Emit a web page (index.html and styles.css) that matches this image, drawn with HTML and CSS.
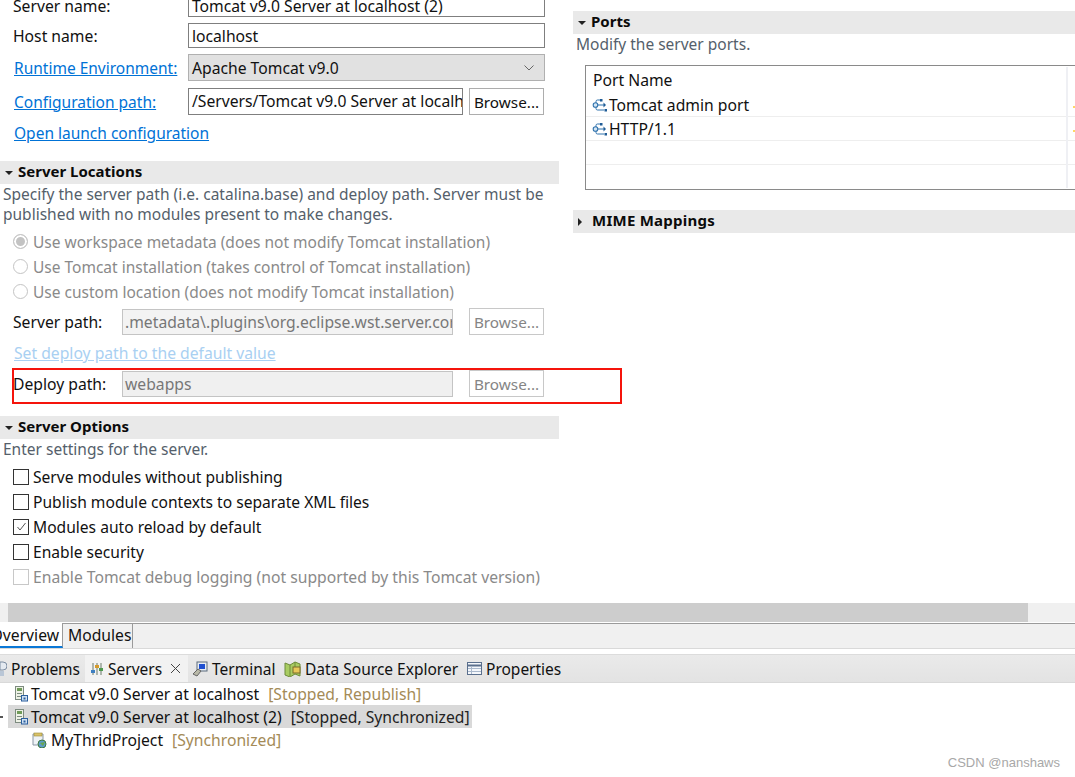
FILE: index.html
```html
<!DOCTYPE html>
<html lang="en">
<head>
<meta charset="utf-8">
<title>Tomcat Server Overview</title>
<link rel="stylesheet" href="styles.css">
</head>
<body>
<svg class="defs" width="0" height="0" aria-hidden="true">
  <symbol id="i-port" viewBox="0 0 16 14">
    <path d="M4 5V3.500Q4 2 5.500 2H8M6 7h6M4 9v1.500Q4 12 5.500 12H12" fill="none" stroke="#2f72ad" stroke-width="1"/>
    <circle cx="3.500" cy="7" r="2.300" fill="#d5e6f4" stroke="#2f72ad" stroke-width="1.100"/>
    <rect x="8" y="1" width="2.500" height="2.500" fill="#1f5c96"/>
    <path d="M11.500 4.500 14 7l-2.500 2.500z" fill="#1f5c96"/>
    <rect x="12.500" y="11" width="2.500" height="2.500" fill="#1f5c96"/>
  </symbol>
  <symbol id="i-server" viewBox="0 0 14 16">
    <rect x="1.500" y=".5" width="8" height="13" fill="#eef2e6" stroke="#7d8b80"/>
    <rect x="3" y="2" width="5" height="3" fill="#6f9a58"/>
    <rect x="3" y="7" width="5" height="1" fill="#7d8b80"/>
    <rect x="3" y="10" width="5" height="1" fill="#7d8b80"/>
    <rect x="7.500" y="9.500" width="6" height="5.500" fill="#cfe0f2" stroke="#2b5f9e"/>
    <rect x="9.500" y="11.500" width="2" height="2" fill="#2b5f9e"/>
  </symbol>
</svg>

<main class="editor">
  <section class="col-left">
    <div class="form-row row-name">
      <span class="label">Server name:</span>
      <span class="field wide">Tomcat v9.0 Server at localhost (2)</span>
    </div>
    <div class="form-row row-host">
      <span class="label">Host name:</span>
      <span class="field wide">localhost</span>
    </div>
    <div class="form-row row-runtime">
      <a class="label link">Runtime Environment:</a>
      <span class="field wide combo">Apache Tomcat v9.0
        <svg class="chevron" width="12" height="8" viewBox="0 0 12 8"><path d="M1.500 1.500 6 6l4.500-4.500" fill="none" stroke="#666" stroke-width="1"/></svg>
      </span>
    </div>
    <div class="form-row row-config">
      <a class="label link">Configuration path:</a>
      <span class="field short clip">/Servers/Tomcat v9.0 Server at localh</span>
      <span class="btn">Browse...</span>
    </div>
    <div class="form-row row-launch"><a class="link launch">Open launch configuration</a></div>

    <h2 class="section-head head-loc"><i class="tri down"></i>Server Locations</h2>
    <p class="desc two-line">Specify the server path (i.e. catalina.base) and deploy path. Server must be<br>published with no modules present to make changes.</p>

    <div class="radios">
      <div class="opt off"><i class="radio on"></i>Use workspace metadata (does not modify Tomcat installation)</div>
      <div class="opt off"><i class="radio"></i>Use Tomcat installation (takes control of Tomcat installation)</div>
      <div class="opt off"><i class="radio"></i>Use custom location (does not modify Tomcat installation)</div>
    </div>

    <div class="form-row row-path">
      <span class="label small">Server path:</span>
      <span class="field disabled clip">.metadata\.plugins\org.eclipse.wst.server.cor</span>
      <span class="btn off-btn">Browse...</span>
    </div>
    <div class="form-row row-setdeploy"><a class="link faded">Set deploy path to the default value</a></div>
    <div class="form-row row-deploy">
      <span class="label small">Deploy path:</span>
      <span class="field disabled filled">webapps</span>
      <span class="btn off-btn">Browse...</span>
      <span class="annotation"></span>
    </div>

    <h2 class="section-head head-opt"><i class="tri down"></i>Server Options</h2>
    <p class="desc">Enter settings for the server.</p>
    <div class="checks">
      <div class="opt"><i class="check"></i>Serve modules without publishing</div>
      <div class="opt"><i class="check"></i>Publish module contexts to separate XML files</div>
      <div class="opt"><i class="check"><svg width="13" height="13" viewBox="0 0 13 13"><path d="M2.500 7 5 10l5.500-7" fill="none" stroke="#555" stroke-width="1"/></svg></i>Modules auto reload by default</div>
      <div class="opt"><i class="check"></i>Enable security</div>
      <div class="opt off debug"><i class="check dim"></i>Enable Tomcat debug logging (not supported by this Tomcat version)</div>
    </div>
  </section>

  <section class="col-right">
    <h2 class="section-head"><i class="tri down"></i>Ports</h2>
    <p class="desc">Modify the server ports.</p>
    <div class="ports">
      <div class="port-head">Port Name</div>
      <div class="port-row"><svg class="p-icon"><use href="#i-port"/></svg>Tomcat admin port<i class="mark"></i></div>
      <div class="port-row"><svg class="p-icon"><use href="#i-port"/></svg>HTTP/1.1<i class="mark"></i></div>
      <div class="port-row"></div>
      <div class="port-row last"></div>
    </div>
    <h2 class="section-head head-mime"><i class="tri right"></i>MIME Mappings</h2>
  </section>
</main>

<div class="hscroll"><div class="thumb"></div></div>

<nav class="page-tabs">
  <span class="ptab active"><span class="ov">Overview</span></span>
  <span class="ptab">Modules</span>
</nav>

<nav class="view-tabs">
  <span class="vtab first">
    <svg width="7" height="16" viewBox="0 0 7 16"><path d="M0 1h3a3 3 0 0 1 0 8H0z" fill="#e4eaf1" stroke="#7d8ea3"/><path d="M0 10h4v5H0z" fill="#b9c6d6"/></svg>
    Problems</span>
  <span class="vtab current">
    <svg width="14" height="14" viewBox="0 0 14 14"><path d="M3 1v12M7 1v12M11 1v12" stroke="#6b7a6b"/><rect x="1" y="8" width="4" height="3" fill="#3e7fc1"/><rect x="5" y="3" width="4" height="3" fill="#d69a2a"/><rect x="9" y="6" width="4" height="3" fill="#4e9a4e"/></svg>
    Servers
    <svg class="close" width="11" height="11" viewBox="0 0 11 11"><path d="m1 1 9 9M10 1l-9 9" stroke="#444" stroke-width="1"/></svg>
  </span>
  <span class="vtab term">
    <svg width="16" height="16" viewBox="0 0 16 16"><rect x="5" y="1" width="10" height="9" fill="#e8edf3" stroke="#5b6b7d"/><rect x="7" y="3" width="6" height="5" fill="#1f4fd0"/><path d="m1 13 5-5 3 2-4 5z" fill="#b9b9a8" stroke="#666"/></svg>
    Terminal</span>
  <span class="vtab dse">
    <svg width="17" height="16" viewBox="0 0 17 16"><path d="M1 2l5 2 5-3 5 2v12l-5-2-5 3-5-2z" fill="#a9cc62" stroke="#6d8b3a"/><path d="M6 4v11M11 1v11" stroke="#6d8b3a"/><rect x="9" y="6" width="7" height="6" fill="#e8c85a" stroke="#7a6a2a"/></svg>
    Data Source Explorer</span>
  <span class="vtab props">
    <svg width="15" height="14" viewBox="0 0 15 14"><rect x=".5" y=".5" width="14" height="12" fill="#f4f7fb" stroke="#5a6f8d"/><path d="M1 3.500h13" stroke="#5a6f8d" stroke-width="2"/><path d="M4.500 4v8M1 6.500h13M1 9.500h13" stroke="#a9b8cc"/></svg>
    Properties</span>
</nav>

<section class="tree">
  <div class="node"><svg class="n-icon"><use href="#i-server"/></svg>Tomcat v9.0 Server at localhost<span class="state">[Stopped, Republish]</span></div>
  <div class="node selected"><i class="twisty"></i><svg class="n-icon"><use href="#i-server"/></svg>Tomcat v9.0 Server at localhost (2)<span class="state dark">[Stopped, Synchronized]</span></div>
  <div class="node child">
    <svg class="n-icon" viewBox="0 0 16 16"><path d="M2 2h10v11H2z" fill="#eef2f6" stroke="#8a97a5"/><rect x="3" y="1" width="8" height="3" fill="#d9c26a" stroke="#9a8a3a" stroke-width=".6"/><circle cx="11" cy="12" r="4" fill="#5d9bc9" stroke="#3f7a3f"/><path d="M9 11l3 3 2-4" fill="#6aa84f"/></svg>
    MyThridProject<span class="state">[Synchronized]</span></div>
</section>

<footer class="watermark">CSDN @nanshaws</footer>
</body>
</html>
```

FILE: styles.css
```css
* { box-sizing: border-box; }
html, body { margin: 0; padding: 0; }
body {
  width: 1075px;
  height: 777px;
  overflow: hidden;
  background: #fff;
  color: #111;
  font: 15.7px/20px "Noto Sans", "Open Sans", sans-serif;
  position: relative;
}
.defs { position: absolute; }
p, h2 { margin: 0; }
i { display: block; font-style: normal; }

.editor {
  display: grid;
  grid-template-columns: 559px 502px;
  column-gap: 14px;
  height: 603px;
}
.col-left { margin-top: -6px; }
.col-right { padding-top: 11px; width: 502px; }

.form-row { display: flex; align-items: center; padding-left: 13px; }
.label { width: 175px; flex: none; white-space: nowrap; }
.label.small { width: 109px; }
.link.label, .link.launch { padding-left: 1px; font-size: 15.5px; }
.row-name { height: 23px; }
.row-host { height: 25px; margin-top: 6px; }
.row-runtime { height: 27px; margin-top: 6px; }
.row-config { height: 27px; margin-top: 7px; }
.row-launch { height: 20px; margin-top: 8px; }
.row-path { height: 27px; margin-top: 4px; }
.row-setdeploy { height: 20px; margin-top: 8px; }
.row-deploy { height: 27px; margin-top: 7px; position: relative; }

.link { color: #0072d6; text-decoration: underline; }
.link.faded { color: #a9d0f2; padding-left: 1px; }

.field {
  display: flex;
  align-items: center;
  height: 100%;
  border: 1px solid #7f7f7f;
  padding: 0 3px;
  background: #fff;
  white-space: nowrap;
  overflow: hidden;
}
.field.wide { width: 357px; }
.field.short { width: 275px; }
.field.clip { display: block; line-height: 24px; }
.field.combo {
  background: #e1e1e1;
  border-color: #b0b0b0;
  justify-content: space-between;
  padding-right: 9px;
}
.field.disabled {
  width: 331px;
  height: 26px;
  border-color: #c4c4c4;
  background: #f0f0f0;
  color: #777;
  padding: 0 2px;
}
.row-path .field.disabled { background: #f3f3f3; }

.btn {
  display: flex;
  align-items: center;
  justify-content: center;
  width: 75px;
  height: 100%;
  margin-left: 6px;
  border: 1px solid #adadad;
  background: #fff;
  flex: none;
  font-size: 15.3px;
  white-space: nowrap;
}
.btn.off-btn { margin-left: 16px; color: #858585; border-color: #c8c8c8; }

.annotation {
  position: absolute;
  left: 12px;
  top: -2px;
  width: 610px;
  height: 36px;
  border: 2px solid #f5140c;
}

.section-head {
  display: flex;
  align-items: center;
  height: 23px;
  padding-bottom: 4px;
  background: #e9e9e9;
  font-size: 15px;
  font-weight: 700;
  color: #0b0b0b;
}
.head-loc { margin-top: 18px; }
.head-opt { margin-top: 19px; }
.head-mime { margin-top: 20px; letter-spacing: .25px; }
.tri { width: 0; height: 0; margin: 4px 5px 0 5px; }
.tri.down { border: 4px solid transparent; border-top: 4px solid #222; border-bottom: 0; }
.tri.right { border: 4px solid transparent; border-left: 4px solid #222; border-right: 0; margin: 4px 10px 0 5px; }

.desc { padding-left: 3px; color: #555f6b; font-size: 15.5px; }

.radios { margin-top: 5px; font-size: 15.5px; }
.checks { margin-top: 5px; font-size: 15.6px; }
.opt { display: flex; align-items: center; height: 25px; padding-left: 13px; white-space: nowrap; }
.opt.off { color: #8a8a8a; }
.opt.debug { font-size: 15.7px; }
.radio {
  width: 15px; height: 15px; margin-right: 5px;
  border: 1px solid #c4c4c4; border-radius: 50%;
  background: #fff; display: flex;
}
.radio.on { box-shadow: inset 0 0 0 2px #fff; background: #c3c3c3; }
.check {
  width: 16px; height: 16px; margin-right: 4px;
  border: 1px solid #333; background: #fff;
  display: flex; align-items: center; justify-content: center;
}
.check.dim { border-color: #c8c8c8; }

.ports {
  margin: 11px 0 0 12px;
  width: 490px;
  height: 125px;
  border: 1px solid #8a8a8a;
  border-right: 0;
  position: relative;
}
.ports::after {
  content: "";
  position: absolute;
  right: 7px;
  top: 1px;
  bottom: 1px;
  width: 2px;
  background: #eff0f4;
}
.port-head { height: 27px; padding-left: 7px; display: flex; align-items: center; }
.port-row {
  height: 24px;
  display: flex;
  align-items: center;
  padding-left: 6px;
  border-bottom: 1px solid #eeeeee;
  position: relative;
}
.port-row.last { border-bottom: 0; }
.p-icon { width: 16px; height: 14px; margin-right: 1px; flex: none; }
.mark {
  position: absolute; right: 0; top: 13px;
  width: 2px; height: 2px; background: #ffd766;
}

.hscroll {
  height: 19px;
  background: #f0f0f0;
  padding-left: 8px;
}
.thumb { width: 1020px; height: 100%; background: #cdcdcd; }

.page-tabs {
  margin-top: 1px;
  height: 26px;
  display: flex;
  background: #f0f0f0;
  border-top: 1px solid #9a9a9a;
  border-bottom: 1px solid #d9d9d9;
}
.ptab {
  display: flex;
  align-items: center;
  height: 24px;
  padding: 0 2px 2px 5px;
  border-right: 1px solid #9a9a9a;
  white-space: nowrap;
  width: 70px;
}
.ptab.active {
  width: 63px;
  margin-top: -1px;
  height: 25px;
  padding: 0 3px 0 0;
  justify-content: flex-end;
  background: #fff;
  border-bottom: 2px solid #0a78d7;
  overflow: hidden;
}

.view-tabs {
  margin-top: 5px;
  height: 29px;
  display: flex;
  background: linear-gradient(#eaeaea, #e3e3e3);
  border-top: 1px solid #dcdcdc;
  border-bottom: 1px solid #d9d9d9;
  white-space: nowrap;
  font-size: 15.5px;
}
.vtab { display: flex; align-items: center; gap: 4px; height: 27px; flex: none; }
.vtab.first { width: 85px; }
.vtab.current { width: 103px; padding-left: 5px; background: #f2f2f2; }
.vtab.term { padding-left: 4px; width: 96px; }
.vtab.dse { width: 183px; }
.vtab.props { padding-left: 0; }
.close { margin-left: 4px; }

.node {
  display: flex;
  align-items: center;
  height: 23px;
  padding-left: 13px;
  white-space: nowrap;
  position: relative;
  top: -1px;
}
.node.selected { background: #d9d9d9; margin-left: 8px; width: 464px; padding-left: 5px; }
.node.child { padding-left: 31px; }
.n-icon { width: 16px; height: 16px; margin-right: 2px; flex: none; }
.child .n-icon { margin-right: 4px; }
.state { color: #a48b57; margin-left: 9px; }
.state.dark { color: #222; }
.twisty {
  position: absolute; left: -8px; top: 11px;
  width: 3px; height: 2px; background: #555;
}

.watermark {
  position: absolute;
  right: 15px;
  bottom: 6px;
  color: #a8a8a8;
  font: 13px/16px "Liberation Sans", sans-serif;
}
```
